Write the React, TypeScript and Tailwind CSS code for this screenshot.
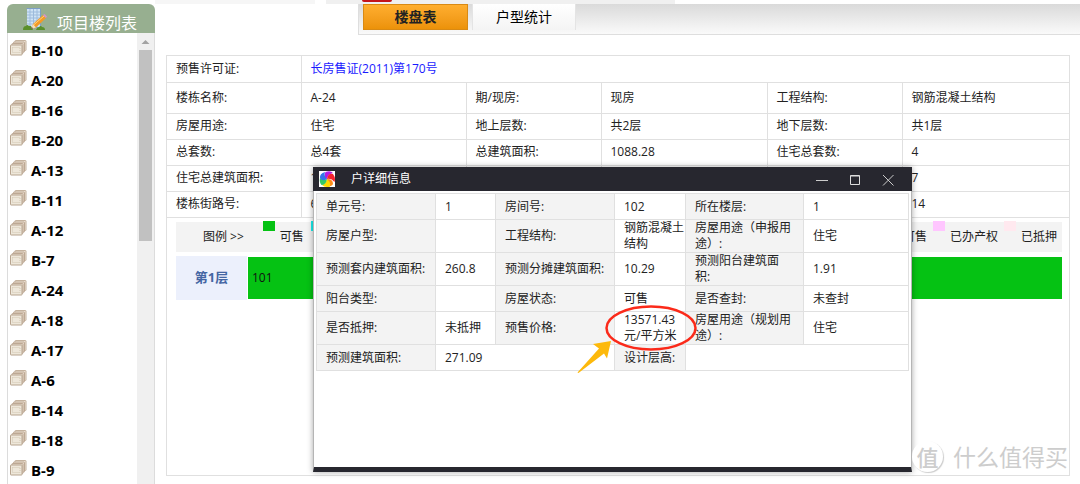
import { useState } from "react";

const buildings = [
  "B-10", "A-20", "B-16", "B-20", "A-13", "B-11", "A-12", "B-7",
  "A-24", "A-18", "A-17", "A-6", "B-14", "B-18", "B-9",
];

const infoRows = [
  ["楼栋名称:", "A-24", "期/现房:", "现房", "工程结构:", "钢筋混凝土结构"],
  ["房屋用途:", "住宅", "地上层数:", "共2层", "地下层数:", "共1层"],
  ["总套数:", "总4套", "总建筑面积:", "1088.28", "住宅总套数:", "4"],
  ["住宅总建筑面积:", "1", "", "", "", "7"],
  ["楼栋街路号:", "6", "", "", "", "14"],
];

const detailRows = [
  ["单元号:", "1", "房间号:", "102", "所在楼层:", "1"],
  ["房屋户型:", "", "工程结构:", "钢筋混凝土结构", "房屋用途（申报用途）:", "住宅"],
  ["预测套内建筑面积:", "260.8", "预测分摊建筑面积:", "10.29", "预测阳台建筑面积:", "1.91"],
  ["阳台类型:", "", "房屋状态:", "可售", "是否查封:", "未查封"],
  ["是否抵押:", "未抵押", "预售价格:", "13571.43 元/平方米", "房屋用途（规划用途）:", "住宅"],
];

function PagesIcon() {
  return (
    <svg width="17" height="17" viewBox="0 0 17 17" className="shrink-0">
      <rect x="5" y="0.5" width="11" height="10" rx="0.5" fill="#eee4d6" stroke="#c4b29e" />
      <rect x="3.5" y="2" width="11" height="10" rx="0.5" fill="#e6dacb" stroke="#bda894" />
      <rect x="2" y="3.5" width="11" height="10" rx="0.5" fill="#e6dacb" stroke="#bda894" />
      <rect x="0.5" y="5" width="11.5" height="10" rx="0.5" fill="#eee7da" stroke="#b7a48f" />
      <rect x="2.500" y="7.5" width="7.5" height="5" fill="none" stroke="#d3c6b3" strokeDasharray="1 1" />
    </svg>
  );
}

function BuildingIcon() {
  return (
    <svg width="24" height="24" viewBox="0 0 24 24" className="shrink-0">
      <path d="M3 1h14l1 1v19H4V2z" fill="#7c9fc6" />
      <path d="M4 2h13v18H4z" fill="#cfe3f5" />
      <path d="M4 5h13M4 8h13M4 11h13M4 14h13M4 17h13M7 2v18M10.500 2v18M14 2v18" stroke="#9dbbdc" />
      <path d="M0 23q0-4 3-4 1-2 3 0 2-1 3 2l1 2zM13 23q1-3 3-3 2-2 3 0 3 0 3 3z" fill="#5a8f2b" />
      <path d="M8 22l2-5L20 8l3 3-10 9.500z" fill="#f39a26" />
      <path d="M10.500 18L21 9" stroke="#ffd27a" />
      <path d="M20 8l1.500-1 2.500 2.500-1.200 1.500z" fill="#d494c6" />
      <path d="M8 22l2-5 3 3.500z" fill="#f4dfb8" />
      <path d="M8 22l.8-2 1.200 1.400z" fill="#444" />
    </svg>
  );
}

function PinwheelIcon() {
  return (
    <svg width="16" height="16" viewBox="0 0 16 16" className="shrink-0">
      <path fill="#fff" d="M0 0h16v16H0z" />
      <path d="M8 8Q4 7 6.500 1q5-2 7.500 1Q9 3 8 8z" fill="#b51be0" />
      <path d="M8 8Q9 2 14 3q3 4 1.500 8-3-4-7.500-3z" fill="#f5222e" />
      <path d="M8 8q6 0 6 5-1 2-5 2.500 1-4-1-7.500z" fill="#ff8a18" />
      <path d="M8 8q4 3 3 7.500-5 1.500-8-1.500 4-1 5-6z" fill="#ffd800" />
      <path d="M8 8q-1 6-5.500 6Q0 11 1 7q3 2.500 7 1z" fill="#35c866" />
      <path d="M8 8Q3 11 1 7 .5 2.500 6 1 4.500 5 8 8z" fill="#3474e8" />
    </svg>
  );
}

function Sidebar() {
  return (
    <aside className="mt-1 flex w-[148px] shrink-0 flex-col">
      <h2 className="flex h-[29px] shrink-0 items-center gap-[10px] rounded-t-md bg-[#97af90] pl-4 text-base text-white">
        <BuildingIcon />
        <span className="pt-2">项目楼列表</span>
      </h2>
      <div className="flex min-h-0 flex-1 border-x border-[#dcdcdc]">
        <ul className="min-w-0 flex-1 overflow-hidden pt-1">
          {buildings.map((name) => (
            <li key={name}>
              <a href="#" className="flex h-[30px] gap-1 pl-[2px] text-[15px] font-bold text-black">
                <span className="pt-[3px]">
                  <PagesIcon />
                </span>
                <span className="leading-[26px]">{name}</span>
              </a>
            </li>
          ))}
        </ul>
        <div className="flex w-[17px] shrink-0 flex-col items-center bg-[#f0f0f0]">
          <svg width="17" height="17" viewBox="0 0 17 17" className="shrink-0">
            <path d="M4.500 11l4-4 4 4z" fill="#a3a3a3" />
          </svg>
          <div className="h-[191px] w-[13px] bg-[#c1c1c1]" />
        </div>
      </div>
    </aside>
  );
}

function Tabs() {
  const [active, setActive] = useState("楼盘表");
  return (
    <nav className="ml-[203px] flex h-[31px] gap-1 border-b border-l border-[#dedede] bg-linear-to-b from-[#dadada] to-[#fafafa] pl-1">
      {["楼盘表", "户型统计"].map((tab) => (
        <button
          key={tab}
          type="button"
          onClick={() => setActive(tab)}
          className={
            active === tab
              ? "h-[26px] w-[105px] border border-[#d98a14] bg-linear-to-b from-[#ffae2e] to-[#ec9208] text-sm font-bold text-[#222]"
              : "h-[26px] w-[104px] border-x border-[#e4e4e4] bg-linear-to-b from-white to-[#f4f4f4] text-sm text-black"
          }
        >
          {tab}
        </button>
      ))}
    </nav>
  );
}

function Swatch({ color, label }: { color: string; label?: string }) {
  return (
    <span className="flex gap-[5px]">
      <i className={`-mt-px h-[10px] w-3 ${color}`} />
      {label && <span className="leading-[30px]">{label}</span>}
    </span>
  );
}

function InfoTable() {
  return (
    <table className="w-full table-fixed border-collapse">
      <colgroup>
        <col className="w-[134px]" />
        <col className="w-[165px]" />
        <col className="w-[135px]" />
        <col className="w-[166px]" />
        <col className="w-[135px]" />
        <col />
      </colgroup>
      <tbody>
        <tr className="h-[26px] border-b border-[#e0e0e0]">
          <th className="border-r border-[#e0e0e0] px-[9px] text-left font-normal">预售许可证:</th>
          <td colSpan={5} className="px-[9px]">
            <a href="#" className="text-[#1a1aff]">长房售证(2011)第170号</a>
          </td>
        </tr>
        {infoRows.map((row, r) => (
          <tr key={r} className={r === 0 ? "h-[31px] border-b border-[#e0e0e0]" : "h-[26px] border-b border-[#e0e0e0]"}>
            {row.map((text, c) =>
              c % 2 === 0 ? (
                <th key={c} className="border-r border-[#e0e0e0] px-[9px] text-left font-normal">{text}</th>
              ) : (
                <td key={c} className="border-r border-[#e0e0e0] px-[9px] last:border-r-0">{text}</td>
              )
            )}
          </tr>
        ))}
      </tbody>
    </table>
  );
}

function DetailDialog() {
  const label = "border border-[#e0e0e0] bg-[#f3f3f3] px-[9px] text-left font-normal";
  const value = "border border-[#e0e0e0] pl-[9px] text-left";
  return (
    <section
      role="dialog"
      aria-label="户详细信息"
      className="absolute top-[167px] left-[313px] flex h-[305px] w-[599px] flex-col border-x border-b-[5px] border-x-[#b5b5b5] border-b-[#27272f] bg-white shadow-[0_0_6px_rgba(0,0,0,0.35)]"
    >
      <header className="-mx-px flex h-6 shrink-0 items-center bg-[#27272f] pr-4 pl-[6px] text-white">
        <PinwheelIcon />
        <h3 className="flex-1 pl-4">户详细信息</h3>
        <div className="flex gap-[17px]">
          <button type="button" aria-label="最小化">
            <svg width="16" height="16" viewBox="0 0 16 16">
              <path d="M2 9.500h12" stroke="#ccc" />
            </svg>
          </button>
          <button type="button" aria-label="最大化">
            <svg width="16" height="16" viewBox="0 0 16 16">
              <path d="M3.500 4.500h9v9h-9zM3.500 5h9" fill="none" stroke="#ddd" />
            </svg>
          </button>
          <button type="button" aria-label="关闭">
            <svg width="16" height="16" viewBox="0 0 16 16">
              <path d="M3 4l10.500 10.500M13.500 4L3 14.500" stroke="#ccc" />
            </svg>
          </button>
        </div>
      </header>
      <div className="px-[2px] pt-[2px]">
        <table className="w-full table-fixed border-collapse">
          <colgroup>
            <col className="w-[119px]" />
            <col className="w-[60px]" />
            <col className="w-[119px]" />
            <col className="w-[71px]" />
            <col className="w-[118px]" />
            <col />
          </colgroup>
          <tbody>
            {detailRows.map((row, r) => (
              <tr key={r} className="h-[26px]">
                {row.map((text, c) =>
                  c % 2 === 0 ? (
                    <th key={c} className={label}>{text}</th>
                  ) : (
                    <td key={c} className={value}>{text}</td>
                  )
                )}
              </tr>
            ))}
            <tr className="h-[26px]">
              <th className={label}>预测建筑面积:</th>
              <td className={value} colSpan={2}>271.09</td>
              <th className={label}>设计层高:</th>
              <td className={value} colSpan={2} />
            </tr>
          </tbody>
        </table>
      </div>
      <svg width="122" height="70" viewBox="0 0 122 70" className="pointer-events-none absolute top-[138px] left-[263px]">
        <ellipse cx="74" cy="23" rx="44.500" ry="21.500" fill="none" stroke="#fb2a1a" strokeWidth="2.500" />
        <path d="M34 36l-18 3 6 4.500L.5 67.500l1 .5L27 48.500l3 5z" fill="#fdb90b" />
      </svg>
    </section>
  );
}

export default function App() {
  return (
    <div className="relative flex h-screen flex-col overflow-hidden bg-white font-['Open_Sans','Noto_Sans_CJK_SC',sans-serif] text-xs text-[#222]">
      <div className="flex min-h-0 flex-1 pl-[7px]">
        <Sidebar />
        <main className="min-w-0 flex-1">
          <div className="flex h-1 gap-[11px]">
            <div className="w-[160px] bg-[#f6f6f6]" />
            <div className="w-[349px] bg-[#f0f0f0] pl-9">
              <div className="h-[2px] w-[30px] rounded-b-full bg-[#c4141c]" />
            </div>
          </div>
          <Tabs />
          <div className="mt-5 mr-[10px] ml-[11px] h-[421px] border border-[#e0e0e0]">
            <InfoTable />
            <div className="mt-1 mr-[7px] ml-[9px] flex h-[30px] justify-between bg-[#f3f3f3] pr-[5px]">
              <div className="flex gap-[7px]">
                <span className="mr-3 pl-[27px] leading-[30px]">图例 &gt;&gt;</span>
                <Swatch color="bg-[#05c213]" label="可售" />
                <Swatch color="bg-[#19f0f0]" />
              </div>
              <div className="flex gap-[6px]">
                <Swatch color="bg-[#f3f3f3]" label="不可售" />
                <Swatch color="bg-[#ffc6ff]" label="已办产权" />
                <Swatch color="bg-[#ffe9ef]" label="已抵押" />
              </div>
            </div>
            <div className="mt-1 mr-[7px] ml-[9px] flex h-11 gap-px">
              <div className="flex w-[71px] items-center justify-center bg-[#ecf0fc] text-[13px] font-bold text-[#4466a3]">
                第1层
              </div>
              <button type="button" className="my-px flex-1 bg-[#05c213] pl-1 text-left text-[#111]">
                101
              </button>
            </div>
          </div>
        </main>
      </div>
      <DetailDialog />
      <div className="pointer-events-none absolute right-3 bottom-3 flex items-center gap-[10px] text-[23px] leading-[30px] text-[#cdcdcd]">
        <span className="flex size-[31px] items-center justify-center rounded-full bg-white text-[22px] font-medium shadow-[1px_1px_1px_#ccc]">
          值
        </span>
        <span>什么值得买</span>
      </div>
    </div>
  );
}
